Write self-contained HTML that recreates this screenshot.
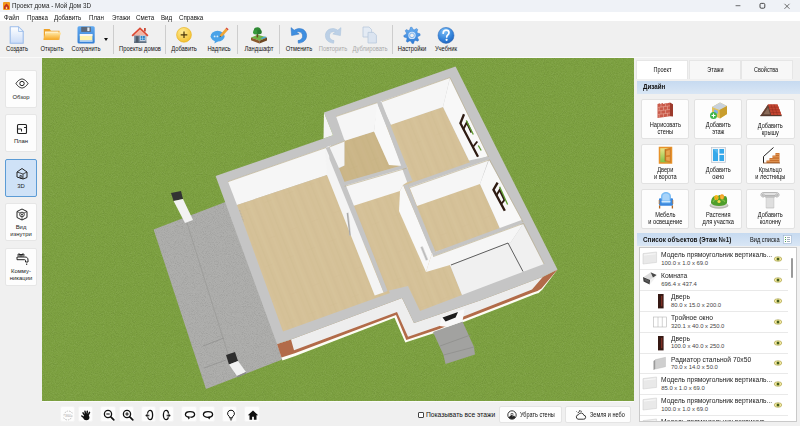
<!DOCTYPE html>
<html><head><meta charset="utf-8">
<style>
*{box-sizing:border-box;margin:0;padding:0}
html,body{width:800px;height:426px;overflow:hidden;background:#f0f0f0;font-family:"Liberation Sans",sans-serif;color:#1a1a1a}
.abs{position:absolute}
svg{display:block;overflow:visible}
#title{left:0;top:0;width:800px;height:12px;background:#eff2f7}
#title .t{left:12px;top:1.2px;font-size:7.4px;line-height:10px;white-space:nowrap;color:#222;transform:scaleX(.85);transform-origin:0 0}
#menu{left:0;top:12px;width:800px;height:10px;background:linear-gradient(to bottom,#fff 0,#fff 9.3px,#f0f0f0 9.3px)}
#menu span{position:absolute;top:.8px;transform:scaleX(.86);transform-origin:0 0;font-size:7.2px;line-height:10px;white-space:nowrap;color:#111}
#tb{left:0;top:22px;width:800px;height:36px;background:#f0f0f0;border-bottom:1px solid #fafafa}
.tl{position:absolute;top:23px;font-size:6.7px;line-height:8px;white-space:nowrap;transform:translateX(-50%) scaleX(.87);color:#111}
.tl.dis{color:#a9a9a9}
.ti{position:absolute;top:4px}
.sep{position:absolute;top:3px;width:1px;height:29px;background:#cdcdcd}
#left{left:0;top:58px;width:42px;height:368px;background:#f0f0f0}
.lb{position:absolute;left:5px;width:32px;height:38px;background:#fdfdfd;border:1px solid #e6e6e6;border-radius:2px}
.lb.sel{background:#cfe2f7;border-color:#5b9bd5}
.lb .tx{position:absolute;left:-4px;right:-4px;text-align:center;font-size:5.9px;line-height:7.2px;color:#222;white-space:nowrap}
.lb svg{position:absolute;left:9px}
#vp{left:42px;top:58px;width:592px;height:343px;background:#7ca040;overflow:hidden}
#bot{left:42px;top:401px;width:594px;height:25px;background:#f0f0f0;border-top:1px solid #fafafa}
.bb{position:absolute;top:4.4px;width:15.6px;height:15.4px;background:#fdfdfd;border-radius:2px;border:.5px solid #f4f4f4}
.bb svg{position:absolute;left:1.8px;top:1.6px}
.btn{position:absolute;top:4px;height:17px;background:#fdfdfd;border:1px solid #e4e4e4;border-radius:2px;font-size:6.4px;line-height:15px;white-space:nowrap;color:#111}.btn span{transform:scaleX(.86);transform-origin:0 50%}
#right{left:634px;top:58px;width:166px;height:368px;background:#f0f0f0}
.tab{position:absolute;top:2.3px;height:18.3px;width:52px;background:#f7f7f7;border:1px solid #e6e6e6;border-bottom:none;text-align:center;font-size:6.4px;line-height:18px;color:#111}
.tab.act{background:#fff}.tab span{display:inline-block;transform:scaleX(.86)}
.hdr{position:absolute;left:3px;width:163px;height:12.4px;background:linear-gradient(#c6daf0,#d9e6f5);font-weight:bold;font-size:7px;line-height:12.4px;color:#111;padding-left:6px;white-space:nowrap}.hdr span.h{display:inline-block;transform:scaleX(.89);transform-origin:0 50%}
.gb{position:absolute;width:48.6px;height:40px;background:#fdfdfd;border:1px solid #e2e2e2;border-radius:2px}
.gb .tx{position:absolute;left:-3px;right:-3px;top:22.6px;text-align:center;font-size:6.3px;line-height:6.9px;color:#111;white-space:nowrap;transform:scaleX(.9)}
.gb svg{position:absolute;left:15px;top:1.6px}
#list{left:5px;top:189.4px;width:158px;height:174.8px;background:#fff;border:1px solid #c9c9c9;overflow:hidden}
.row{position:absolute;left:0;width:148px;height:21px;border-bottom:1px solid #e9e9e9}
.row .n{position:absolute;top:2.1px;font-size:7.3px;line-height:8px;white-space:nowrap;color:#222;transform:scaleX(.917);transform-origin:0 0}
.row .d{position:absolute;top:10.8px;font-size:5.9px;line-height:7px;white-space:nowrap;color:#444}
.row .eye{position:absolute;left:134px;top:7px}
.row .ic{position:absolute}
</style></head><body>
<div id="title" class="abs">
<svg class="abs" style="left:3px;top:2px" width="7" height="8" viewBox="0 0 7 8"><rect width="7" height="8" rx="1" fill="#f39a1e"/><path d="M1 4.2 L3.5 1.6 L6 4.2 V7 H1Z" fill="#c4331d"/><rect x="2.8" y="4.8" width="1.4" height="2.2" fill="#ffd98a"/></svg>
<div class="abs t">Проект дома - Мой Дом 3D</div>
<svg class="abs" style="left:733px;top:0" width="67" height="12" viewBox="0 0 67 12"><path d="M2.6 5.7h4.8" stroke="#333" stroke-width=".7"/><rect x="27" y="3.4" width="4.8" height="4.8" rx="1.2" fill="none" stroke="#333" stroke-width=".9"/><path d="M51.5 3.8l5 5M56.5 3.8l-5 5" stroke="#333" stroke-width=".7"/></svg>
</div>
<div id="menu" class="abs">
<span style="left:4px">Файл</span><span style="left:26.5px">Правка</span><span style="left:54px">Добавить</span><span style="left:89px">План</span><span style="left:111.5px">Этажи</span><span style="left:136px">Смета</span><span style="left:161px">Вид</span><span style="left:178.5px">Справка</span>
</div>
<div id="tb" class="abs">
<div class="ti" style="left:8.399999999999999px"><svg width="18" height="18" viewBox="0 0 18 18" style=""><defs><linearGradient id="gn" x1="0" y1="0" x2="0" y2="1"><stop offset="0" stop-color="#ffffff"/><stop offset="1" stop-color="#cbdcf7"/></linearGradient></defs>
<path d="M2.200 .800h8.300l4.700 4.700V17.200H2.200z" fill="url(#gn)" stroke="#9bbcea" stroke-width="1.100" stroke-linejoin="round"/><path d="M10.500 .800v4.700h4.700z" fill="#eef4fd" stroke="#9bbcea" stroke-width=".800" stroke-linejoin="round"/></svg></div>
<div class="tl" style="left:17.4px">Создать</div>
<div class="ti" style="left:42.5px"><svg width="18" height="18" viewBox="0 0 18 18" style=""><defs><linearGradient id="go" x1="0" y1="0" x2="0" y2="1"><stop offset="0" stop-color="#ffe8a6"/><stop offset="1" stop-color="#f6a823"/></linearGradient></defs>
<path d="M.800 3h5.800l1.400 1.700H16.500v9H.800z" fill="#eea22a"/><path d="M2 5.500h13.500v7.500H2z" fill="#fff8e2"/><path d="M.300 13.700L2.800 6.500h15.400l-2.700 7.200z" fill="url(#go)"/></svg></div>
<div class="tl" style="left:51.5px">Открыть</div>
<div class="ti" style="left:77px"><svg width="18" height="18" viewBox="0 0 18 18" style=""><defs><linearGradient id="gs" x1="0" y1="0" x2="0" y2="1"><stop offset="0" stop-color="#62aaf0"/><stop offset="1" stop-color="#347fd6"/></linearGradient></defs>
<rect x=".500" y=".300" width="17.200" height="17.200" rx="1.500" fill="url(#gs)"/><rect x="4.200" y=".900" width="9.600" height="5" fill="#5d6877"/><rect x="10.300" y="1.500" width="2.200" height="3.600" fill="#e3e9f0"/><rect x="2.800" y="8" width="12.600" height="7.600" fill="#fff3ad"/><rect x="2.800" y="8" width="12.600" height="2" fill="#f6f6f6"/><rect x="2.800" y="14.200" width="12.600" height="1.800" fill="#a5cbf5"/></svg></div>
<div class="tl" style="left:86px">Сохранить</div>
<div class="ti" style="left:130.5px"><svg width="18" height="18" viewBox="0 0 18 18" style=""><rect x="3" y="8" width="12.400" height="8.600" fill="#8697ab"/><rect x="3" y="15.600" width="12.400" height="1.300" fill="#5d6b7c"/><rect x="13" y="2" width="1.800" height="3.500" fill="#c94a36"/><path d="M.500 9.200L9 1.200l8.500 8-1.300 1.300L9 3.800 1.800 10.500z" fill="#dc4630"/><path d="M9 3.400l6.400 6H2.600z" fill="#f2b4a4"/><rect x="4.600" y="10.200" width="3" height="6.400" fill="#4f5b69"/><rect x="9" y="9.600" width="5.400" height="5" fill="#eef6ff"/><path d="M9.500 10.100h2v1.800h-2zM11.900 10.100h2v1.800h-2zM9.500 12.300h2v1.800h-2zM11.900 12.300h2v1.800h-2z" fill="#2d86c9"/></svg></div>
<div class="tl" style="left:139.5px">Проекты домов</div>
<div class="ti" style="left:175px"><svg width="18" height="18" viewBox="0 0 18 18" style=""><defs><radialGradient id="ga" cx=".4" cy=".3" r=".8"><stop offset="0" stop-color="#ffec96"/><stop offset="1" stop-color="#f2bb22"/></radialGradient></defs>
<circle cx="9" cy="8.800" r="7.400" fill="url(#ga)" stroke="#e8ae18" stroke-width=".600"/><path d="M9 5.500v6.600M5.700 8.800h6.600" stroke="#4a3508" stroke-width="1.200"/></svg></div>
<div class="tl" style="left:184px">Добавить</div>
<div class="ti" style="left:209.5px"><svg width="18" height="18" viewBox="0 0 18 18" style=""><ellipse cx="7.6" cy="10.2" rx="7" ry="5.4" fill="#4aa3e8"/><path d="M5 14.6l-.6 3 3.8-2.4z" fill="#4aa3e8"/><circle cx="4.6" cy="10.4" r=".9" fill="#d8ecfb"/><circle cx="7.4" cy="10.4" r=".9" fill="#d8ecfb"/><path d="M9.6 11.2l1-3 5-5.6 2 1.8-5 5.6z" fill="#f2a533"/><path d="M15.6 2.6l1-1.2 2 1.8-1 1.2z" fill="#d94a3a"/><path d="M9.6 11.2l.4-1.4 1 .9z" fill="#3a3a3a"/></svg></div>
<div class="tl" style="left:218.5px">Надпись</div>
<div class="ti" style="left:250px"><svg width="18" height="18" viewBox="0 0 18 18" style=""><path d="M1 11.4l7-2.6 9 2.8-7.6 3.2z" fill="#6fb343"/><path d="M1 11.4v2.8l8.4 3.4v-2.8z" fill="#8a5a2c"/><path d="M9.4 14.8v2.8l7.6-3.2v-2.8z" fill="#6e4520"/><path d="M10.5 12.2l4.5-1.7 1.8.6-4.4 1.9z" fill="#4aa6e6"/><rect x="6.6" y="7" width="1.5" height="4.4" fill="#6b431f"/><circle cx="7.3" cy="4.8" r="3.6" fill="#2f8a34"/><circle cx="5.2" cy="6.2" r="2.2" fill="#37993b"/><circle cx="9.6" cy="6" r="2.3" fill="#2a7d30"/></svg></div>
<div class="tl" style="left:259px">Ландшафт</div>
<div class="ti" style="left:289.5px"><svg width="18" height="18" viewBox="0 0 18 18" style=""><g ><path d="M1 1.6l.6 8 7.6-1.6-2.6-1.8c3-1.2 6 .4 6 3.8 0 2.4-1.6 4.2-4.6 4.6l.4 2.6c5-.4 8.2-3.4 8.2-7.6 0-6-6.600-9.2-12.400-5.400z" fill="#3f8fe0" stroke="#2b6fc0" stroke-width=".5"/></g></svg></div>
<div class="tl" style="left:298.5px">Отменить</div>
<div class="ti" style="left:324px"><svg width="18" height="18" viewBox="0 0 18 18" style=""><g transform="translate(18,0) scale(-1,1)"><path d="M1 1.6l.6 8 7.6-1.6-2.6-1.8c3-1.2 6 .4 6 3.8 0 2.4-1.6 4.2-4.6 4.6l.4 2.6c5-.4 8.2-3.4 8.2-7.6 0-6-6.600-9.2-12.400-5.400z" fill="#bcd0e6" stroke="#a9c0da" stroke-width=".5"/></g></svg></div>
<div class="tl dis" style="left:333px">Повторить</div>
<div class="ti" style="left:361px"><svg width="18" height="18" viewBox="0 0 18 18" style=""><path d="M2 1h6l2.600 2.600V11H2z" fill="#e4ebf4" stroke="#b8c8dc" stroke-width=".8"/><path d="M7 6.400h5.600L15.400 9.200V17H7z" fill="#dbe4f0" stroke="#b8c8dc" stroke-width=".8"/></svg></div>
<div class="tl dis" style="left:370px">Дублировать</div>
<div class="ti" style="left:402.5px"><svg width="18" height="18" viewBox="0 0 18 18" style=""><defs><linearGradient id="gg" x1="0" y1="0" x2="0" y2="1"><stop offset="0" stop-color="#6bb1f2"/><stop offset="1" stop-color="#2e7ad4"/></linearGradient></defs><path d="M17.04 7.80L17.20 9.40L14.88 10.57L14.54 11.70L15.82 13.96L14.80 15.20L12.33 14.39L11.30 14.94L10.60 17.44L9.00 17.60L7.83 15.28L6.70 14.94L4.44 16.22L3.20 15.20L4.01 12.73L3.46 11.70L0.96 11.00L0.80 9.40L3.12 8.23L3.46 7.10L2.18 4.84L3.20 3.60L5.67 4.41L6.70 3.86L7.40 1.36L9.00 1.20L10.17 3.52L11.30 3.86L13.56 2.58L14.80 3.60L13.99 6.07L14.54 7.10Z" fill="url(#gg)" stroke="#2a6ec4" stroke-width=".4" stroke-linejoin="round"/><circle cx="9" cy="9.4" r="3.700" fill="#cfe3f9"/><circle cx="9" cy="9.4" r="2.300" fill="#f0f0f0" stroke="#5a9fe8" stroke-width=".700"/></svg></div>
<div class="tl" style="left:411.5px">Настройки</div>
<div class="ti" style="left:437px"><svg width="18" height="18" viewBox="0 0 18 18" style=""><defs><radialGradient id="gh" cx=".4" cy=".25" r=".9"><stop offset="0" stop-color="#7cc0f8"/><stop offset=".6" stop-color="#2f7fd8"/><stop offset="1" stop-color="#1c57ad"/></radialGradient></defs>
<circle cx="9" cy="9.400" r="8" fill="url(#gh)" stroke="#1f5cb0" stroke-width=".5"/><path d="M6.200 7.200c0-2 1.300-3 2.900-3 1.700 0 2.900 1 2.900 2.500 0 2.200-2.300 2.300-2.300 4.300" fill="none" stroke="#fff" stroke-width="1.700" stroke-linecap="round"/><circle cx="9.600" cy="13.800" r="1.100" fill="#fff"/></svg></div>
<div class="tl" style="left:446px">Учебник</div>
<div class="abs" style="left:104px;top:15.5px;width:0;height:0;border-left:2.2px solid transparent;border-right:2.2px solid transparent;border-top:3px solid #111"></div>
<div class="sep" style="left:113px"></div>
<div class="sep" style="left:164.6px"></div>
<div class="sep" style="left:237px"></div>
<div class="sep" style="left:279px"></div>
<div class="sep" style="left:391.6px"></div>
</div>
<div id="left" class="abs">
<div class="lb" style="top:11.6px"><svg width="14" height="13" viewBox="0 0 14 13" style="top:7.6px"><path d="M1 5.500C3 2 6 1 7 1s4 1 6 4.500C11 9 8 10 7 10S3 9 1 5.500z" fill="none" stroke="#222" stroke-width="1"/><circle cx="7" cy="5.500" r="2.200" fill="none" stroke="#222" stroke-width="1"/></svg><div class="tx" style="top:23.2px">Обзор</div></div>
<div class="lb" style="top:56px"><svg width="14" height="13" viewBox="0 0 14 13" style="top:7.6px"><rect x="2.500" y="1.500" width="9" height="9" rx="1" fill="none" stroke="#222" stroke-width="1.100"/><path d="M2.500 6h4v2.500M9 4.500h2.500" fill="none" stroke="#222" stroke-width="1"/></svg><div class="tx" style="top:23.2px">План</div></div>
<div class="lb sel" style="top:100.6px"><svg width="14" height="13" viewBox="0 0 14 13" style="top:7.6px"><path d="M2 5l5-3.500 5 3.500v5.500l-4 1.500-6-2z" fill="none" stroke="#222" stroke-width="1" stroke-linejoin="round"/><path d="M2 5l6 2v5M8 7l4-2M5 8.500v2.500l2 .500V9z" fill="none" stroke="#222" stroke-width=".800"/></svg><div class="tx" style="top:23.2px">3D</div></div>
<div class="lb" style="top:145.2px"><svg width="14" height="13" viewBox="0 0 14 13" style="top:4.2px"><path d="M2 3.500l5-2.500 5 2.500v6L7 12 2 9.500z" fill="none" stroke="#222" stroke-width="1" stroke-linejoin="round"/><path d="M2 3.500l5 2.500 5-2.500M7 6v6" fill="none" stroke="#222" stroke-width=".700"/><circle cx="7" cy="6.500" r="2.300" fill="#fdfdfd" stroke="#222" stroke-width=".900"/><circle cx="7" cy="6.500" r=".900" fill="#222"/></svg><div class="tx" style="top:19.4px">Вид<br>изнутри</div></div>
<div class="lb" style="top:189.8px"><svg width="14" height="13" viewBox="0 0 14 13" style="top:4.2px"><path d="M3.500 1.500h5M6 1.500v2.500M2 4h8c2 0 3 1 3 3v2h-2.500V7.500c0-.500-.300-.800-.800-.800H2z" fill="none" stroke="#222" stroke-width="1" stroke-linejoin="round"/><circle cx="4" cy="2" r="1.200" fill="none" stroke="#222" stroke-width=".800"/><circle cx="8" cy="2" r="1.200" fill="none" stroke="#222" stroke-width=".800"/><path d="M11.700 10.500v1.500" stroke="#222" stroke-width="1"/></svg><div class="tx" style="top:19.4px">Комму-<br>никации</div></div>
</div>
<div id="vp" class="abs"><svg viewBox="42 58 594 344" width="594" height="344" style="position:absolute;left:0;top:0"><defs><pattern id="wood" width="23" height="60" patternUnits="userSpaceOnUse" patternTransform="rotate(-21.5)"><rect width="23" height="60" fill="#d5c198"/><rect x="0" width="2.600" height="60" fill="#ccb78b" opacity=".22"/><rect x="5.500" width="1.200" height="60" fill="#dbc8a0" opacity=".26"/><rect x="9" width="2.200" height="60" fill="#cfba8f" opacity=".22"/><rect x="14" width="1.500" height="60" fill="#cab588" opacity=".22"/><rect x="18" width="2.400" height="60" fill="#dac69e" opacity=".22"/><rect x="2" y="20" width="7" height=".600" fill="#c9b388" opacity=".22"/><rect x="11" y="45" width="8" height=".600" fill="#c9b388" opacity=".22"/></pattern><filter id="nw" x="0" y="0" width="100%" height="100%" color-interpolation-filters="sRGB"><feTurbulence type="fractalNoise" baseFrequency="1.1" numOctaves="2" seed="7"/><feColorMatrix values="0 0 0 0 1  0 0 0 0 1  0 0 0 0 1  .2 0 0 0 -.1"/></filter><filter id="nb" x="0" y="0" width="100%" height="100%" color-interpolation-filters="sRGB"><feTurbulence type="fractalNoise" baseFrequency="1.1" numOctaves="2" seed="7"/><feColorMatrix values="0 0 0 0 0  0 0 0 0 0  0 0 0 0 0  -.2 0 0 0 .1"/></filter></defs><rect x="42" y="58" width="594" height="344" filter="url(#nw)"/><rect x="42" y="58" width="594" height="344" filter="url(#nb)"/><polygon points="153.6,229.6 228,201 284,357 281,360 206,389" fill="#acacaa" />
<clipPath id="cp"><polygon points="153.6,229.6 228,201 284,357 281,360 206,389"/></clipPath><g clip-path="url(#cp)"><rect x="150" y="198" width="140" height="195" filter="url(#nw)"/><rect x="150" y="198" width="140" height="195" filter="url(#nb)"/></g>
<polyline points="187,223 228,354" fill="none" stroke="#9a9a98" stroke-width="0.8" />
<polyline points="203,346 224,338" fill="none" stroke="#8e8e8c" stroke-width="0.7" />
<polyline points="204,368 226,360" fill="none" stroke="#8e8e8c" stroke-width="0.7" />
<polygon points="171,193 181,191 183,199 173.6,201" fill="#333" />
<polygon points="173.6,201 183,199 193,220 185,223" fill="#f2f2f2" />
<polygon points="226,355 235,352 238,361 229,364.4" fill="#2e2e2e" />
<polygon points="229,364.4 238,361 246,372 237,376" fill="#f2f2f2" />
<polygon points="237,376 246,372 246.5,373.5 237.5,377.5" fill="#8a8a88" />
<polygon points="277,344 291,339.5 402,298 414,323 480,300.5 543,276.7 557.5,269.5 542.2,289.8 538.6,293 534,294.6 439,331.6 405.3,342.6 394.5,317.8 295.3,356 282.4,360.4 280,352" fill="#fdfdf5" />
<polygon points="277,344 291,339.5 402,298 414,323 480,300.5 543,276.7 557.5,269.5 541.5,288.4 537.5,291 533,292.4 438.5,329.3 406.3,340 396,315 294.8,353.3 281.5,357.4" fill="#b26b49" />
<polygon points="291,339.5 402,298 414,323 480,300.5 543,276.7 532,289.5 438,326.5 408,336.7 397,312 294,350.3" fill="#eeeeee" />
<polygon points="215.6,176 333,135.3 324,112.4 455.6,66.6 557.5,269.5 543,276.7 480,300.5 414,323 402,298 291,339.5 277,344" fill="#c5c5c5" />
<polygon points="324,112.4 323.5,138.4 333,135.3" fill="#f4f4f4" />
<polygon points="228,181.5 331,145.5 327,175 237,205" fill="#f6f6f6" />
<polygon points="237,205 327,175 390,293 283,331.6" fill="url(#wood)" />
<polygon points="344.4,140.6 374,131.5 392,124 443,107 469,160.5 480,184 494,215 505,240 450,265 462,295 420,311 408,286 387,291 338,169 344.4,165.6" fill="url(#wood)" />
<polygon points="344.4,140.6 374,131.5 389,165 403,165 343,183 338,169 344.4,165.6" fill="#8a6a20" opacity=".13"/>
<polygon points="336,116.2 378,102.2 374,131.5 345,140.8 344,139" fill="#f6f6f6" />
<polygon points="329,147 344.4,141 344.4,165.6 337,168.75" fill="#f4f4f4" />
<polygon points="380,101.8 450,77.4 443,107 391,124.8" fill="#f6f6f6" />
<polygon points="450,78 443,107 469,160.5 488,156.5" fill="#f8f8f8" />
<polygon points="377,102.6 374,131.5 389,165 402,166" fill="#f8f8f8" />
<polygon points="344,184 404,167 407,166.5 409,181 403,185 400,191 353,206" fill="#f6f6f6" />
<polygon points="403,185 400,191 399,211 426,272 432,253" fill="#f8f8f8" />
<polygon points="409,186 489,158 480,184 417,206" fill="#f6f6f6" />
<polygon points="489,160 480,184 494,215 505,240 523,222" fill="#f8f8f8" />
<polygon points="432,253 523,224 511,242 450,265 426,272" fill="#f6f6f6" />
<polygon points="450,265 511,242 523,224 544,264 462,295" fill="#f0f0f0" />
<polyline points="451,265 508,243 523,271.5" fill="none" stroke="#3a3a3a" stroke-width="0.8" />
<polygon points="325,148 327,175 374.7,295.6 383.6,292.6" fill="#f4f4f4" />
<polygon points="325.5,147.5 329.5,147 339.8,170 367.5,240 387.6,291 383.6,292.6 363.2,240 335.4,170" fill="#c5c5c5" />
<polygon points="346.6,213 348.6,212.4 351,235 349.4,236" fill="#c9c9c9" />
<polyline points="347.3,213 350,235.5" fill="none" stroke="#8f8f8f" stroke-width="0.6" />
<polygon points="377,102.6 381.3,101.6 392.3,130 412.4,180.4 407.2,182.2 388,130" fill="#c5c5c5" />
<polygon points="343,182.3 406,164.3 406.8,167.6 344.6,185.7" fill="#c5c5c5" />
<polygon points="408,184 488,156 489.6,159.3 409.2,187.3" fill="#c5c5c5" />
<polygon points="403.4,185 407.8,184.2 435.4,251.8 431.5,253" fill="#c5c5c5" />
<polygon points="432,253 522.3,219.8 523.6,223 433,256.3" fill="#c5c5c5" />
<polyline points="228,181.7 326,147.6" fill="none" stroke="#b7aa84" stroke-width="0.8" opacity=".75"/>
<polyline points="336,116.5 377.5,102.6" fill="none" stroke="#b7aa84" stroke-width="0.8" opacity=".75"/>
<polyline points="382,101.6 450,77.6 488.5,157" fill="none" stroke="#b7aa84" stroke-width="0.8" opacity=".75"/>
<polyline points="344.7,186.3 406.6,168.2" fill="none" stroke="#b7aa84" stroke-width="0.8" opacity=".75"/>
<polyline points="409.6,187.7 489.6,159.8 523,222" fill="none" stroke="#b7aa84" stroke-width="0.8" opacity=".75"/>
<polyline points="433.2,256.6 523.6,223.4 544,264" fill="none" stroke="#b7aa84" stroke-width="0.8" opacity=".75"/>
<polyline points="329,147.2 344.4,141.2" fill="none" stroke="#b7aa84" stroke-width="0.8" opacity=".75"/>
<polygon points="420.3,247.2 422.8,246.2 428.2,259.6 425.8,260.8" fill="#d2d2d2" />
<polyline points="421.5,246.8 427,260.2" fill="none" stroke="#9a9a9a" stroke-width="0.5" />
<polyline points="239.6,210 243.8,222" fill="none" stroke="#a8a8a8" stroke-width="0.9" stroke-dasharray="0.8 0.8"/>
<polyline points="464,114.3 460.4,123.2 478,156.7" fill="none" stroke="#2e1b12" stroke-width="2.3" />
<polyline points="463.2,129.5 466.8,122.5 471.5,132.5" fill="none" stroke="#2e1b12" stroke-width="1.9" />
<polyline points="473.3,146.5 477.3,141.5" fill="none" stroke="#2e1b12" stroke-width="1.9" />
<polyline points="466.3,120.5 473.3,134.5" fill="none" stroke="#5f9c30" stroke-width="1.3" />
<polyline points="478.3,145.5 481.2,150.5" fill="none" stroke="#5f9c30" stroke-width="1.3" />
<polyline points="497.6,182.7 493.5,189.7 504.8,210.8" fill="none" stroke="#2e1b12" stroke-width="2.4" />
<polyline points="496.3,195.5 499.6,190 504.5,200" fill="none" stroke="#2e1b12" stroke-width="1.9" />
<polyline points="501,204.2 504.5,200" fill="none" stroke="#2e1b12" stroke-width="1.9" />
<polyline points="499.6,186.8 507.6,204.5" fill="none" stroke="#5f9c30" stroke-width="1.3" />
<polygon points="433,332 462.5,321.5 474,347 475,354.5 445.5,364 443.5,355" fill="#a2a2a0" />
<polyline points="440,346 470.5,335" fill="none" stroke="#8c8c8a" stroke-width="0.7" />
<polyline points="443.5,355 474,347" fill="none" stroke="#8c8c8a" stroke-width="0.7" />
<polygon points="439.5,326 441.5,317.2 464.5,309 462.5,321.5 447,327" fill="#f8f8f8" />
<polygon points="442.5,317.5 458,311.9 455.6,317.6 445.6,321.6" fill="#1c1c1c" /></svg></div>
<div id="bot" class="abs">
<div class="bb" style="left:17.6px"><svg width="12" height="12" viewBox="0 0 12 12" style=""><path d="M2 6.500a4.500 4.500 0 0 1 8.500-2M10 6.500a4.500 4.500 0 0 1-8.500 2" fill="none" stroke="#b5b5b5" stroke-width=".900" stroke-dasharray="1.500 1"/><text x="6" y="8" font-size="4" text-anchor="middle" fill="#aaa" font-family="Liberation Sans">360</text></svg></div>
<div class="bb" style="left:35.599999999999994px"><svg width="12" height="12" viewBox="0 0 12 12" style=""><ellipse cx="6.400" cy="8.500" rx="3" ry="2.700" fill="#111"/><path d="M6.200 8.500L3 3.800M6.300 8.500L5 2.300M6.600 8.500L7.300 2.200M7 8.500L9.500 3.400M5 9.400L1.800 7" stroke="#111" stroke-width="1.500" stroke-linecap="round"/></svg></div>
<div class="bb" style="left:58.3px"><svg width="12" height="12" viewBox="0 0 12 12" style=""><circle cx="5" cy="5" r="3.600" fill="none" stroke="#111" stroke-width="1.300"/><path d="M7.800 7.800l3 3" stroke="#111" stroke-width="1.700" stroke-linecap="round"/><path d="M3.300 5h3.400" stroke="#111" stroke-width="1.100"/></svg></div>
<div class="bb" style="left:76.8px"><svg width="12" height="12" viewBox="0 0 12 12" style=""><circle cx="5" cy="5" r="3.600" fill="none" stroke="#111" stroke-width="1.300"/><path d="M7.800 7.800l3 3" stroke="#111" stroke-width="1.700" stroke-linecap="round"/><path d="M3.300 5h3.400M5 3.300v3.400" stroke="#111" stroke-width="1.100"/></svg></div>
<div class="bb" style="left:98.6px"><svg width="12" height="12" viewBox="0 0 12 12" style=""><ellipse cx="7" cy="6" rx="2.600" ry="4.600" fill="none" stroke="#111" stroke-width="1.300"/><path d="M2 6.500l2.500-2v1.300h2v1.400h-2v1.300z" fill="#111" stroke="#fdfdfd" stroke-width=".400"/></svg></div>
<div class="bb" style="left:116.5px"><svg width="12" height="12" viewBox="0 0 12 12" style=""><ellipse cx="5" cy="6" rx="2.600" ry="4.600" fill="none" stroke="#111" stroke-width="1.300"/><path d="M10 6.500l-2.500-2v1.300h-2v1.400h2v1.300z" fill="#111" stroke="#fdfdfd" stroke-width=".400"/></svg></div>
<div class="bb" style="left:139.3px"><svg width="12" height="12" viewBox="0 0 12 12" style=""><ellipse cx="6" cy="5.500" rx="4.600" ry="2.800" fill="none" stroke="#111" stroke-width="1.300"/><path d="M4.500 10.500l2.500-2.600-3.400-.400z" fill="#111"/><path d="M5 8.200l2 .2" stroke="#fdfdfd" stroke-width=".5"/></svg></div>
<div class="bb" style="left:157.2px"><svg width="12" height="12" viewBox="0 0 12 12" style=""><ellipse cx="6" cy="5.500" rx="4.600" ry="2.800" fill="none" stroke="#111" stroke-width="1.300"/><path d="M7.500 10.500L5 7.900l3.400-.400z" fill="#111"/></svg></div>
<div class="bb" style="left:179.9px"><svg width="12" height="12" viewBox="0 0 12 12" style=""><path d="M6 1.200a3.300 3.300 0 0 0-2 6c.500.500.700 1 .700 1.600h2.600c0-.600.200-1.100.700-1.600a3.300 3.300 0 0 0-2-6z" fill="none" stroke="#111" stroke-width="1"/><path d="M4.800 9.800h2.400M5.100 10.900h1.800" stroke="#111" stroke-width=".800"/></svg></div>
<div class="bb" style="left:202.3px"><svg width="12" height="12" viewBox="0 0 12 12" style=""><path d="M6 1.500L.800 6.300h1.700v4.500h2.600V7.800h1.800v3h2.600V6.300h1.700z" fill="#111"/></svg></div>
<div class="abs" style="left:376px;top:9.500px;width:6px;height:6px;border:.8px solid #444;background:#fff;border-radius:1px"></div>
<div class="abs" style="left:384px;top:5px;font-size:6.700px;line-height:15px;white-space:nowrap;color:#111">Показывать все этажи</div>
<div class="btn" style="left:456.500px;width:63px"><svg width="10" height="10" viewBox="0 0 10 10" style="position:absolute;left:7.500px;top:2.800px"><circle cx="5" cy="5" r="4.200" fill="none" stroke="#222" stroke-width=".900"/><path d="M1.500 7.200a4.200 4.200 0 0 0 7 0L7 5.500 5.800 6.500 4.500 5z" fill="#222"/><path d="M4 3.500h2v2H4z" fill="none" stroke="#222" stroke-width=".600"/></svg><span style="position:absolute;left:20px">Убрать стены</span></div>
<div class="btn" style="left:523px;width:66px"><svg width="11" height="10" viewBox="0 0 11 10" style="position:absolute;left:8.500px;top:2.800px"><path d="M3 9.200h5.500a2 2 0 0 0 .300-4 2.800 2.800 0 0 0-5.300-.500A2.300 2.300 0 0 0 3 9.200z" fill="none" stroke="#222" stroke-width=".900"/><path d="M3.200 3.200a2.200 2.200 0 0 1 3.600-1.700" fill="none" stroke="#222" stroke-width=".800"/><path d="M1.300 1.300l.900.900M4.500.200v1.200" stroke="#222" stroke-width=".600"/></svg><span style="position:absolute;left:23.500px">Земля и небо</span></div>
</div>
<div id="right" class="abs">
<div class="tab act" style="left:2.4px"><span>Проект</span></div>
<div class="tab" style="left:55.4px"><span>Этажи</span></div>
<div class="tab" style="left:106.5px"><span>Свойства</span></div>
<div class="hdr" style="top:23.4px"><span class="h">Дизайн</span></div>
<div class="gb" style="left:6.8px;top:40.6px"><svg width="20" height="18" viewBox="0 0 20 18" style="left:14.0px"><path d="M1.500 3L4 2.200V3l3-.900V3l3.500-1V2.600L14 1.600V15.200L1.500 17z" fill="#c95a4a"/><path d="M14 1.600l3 1.600V15.600l-3-.400z" fill="#9c3a2c"/><path d="M1.500 6.500L14 4.800M1.500 10L14 8.400M1.500 13.500L14 12M5 3v3M9.500 2.500v2.900M3.200 6.300v3.500M7.500 5.700v3.500M11.500 5.200v3.500M5 9.600v3.500M9.500 9v3.500M3.200 13.300v3.500M7.500 12.800v3.500M11.500 12.300v3.500" stroke="#eab0a2" stroke-width=".550" fill="none"/></svg><div class="tx">Нарисовать<br>стены</div></div>
<div class="gb" style="left:59.6px;top:40.6px"><svg width="20" height="18" viewBox="0 0 20 18" style="left:14.0px"><path d="M3 6l8-4.500 7 3.500v8l-7 4.500-8-3.500z" fill="#e3c25a"/><path d="M3 6l8-4.500 7 3.500-7.500 4z" fill="#c9d2dc"/><path d="M10.500 9L18 5v8l-7 4.500z" fill="#c99e2e"/><path d="M5 8.200l3.800 1.600v3.200L5 11.400z" fill="#7db1e8"/><circle cx="4.500" cy="14.500" r="3.500" fill="#3db54a"/><path d="M4.500 12.500v4M2.500 14.500h4" stroke="#fff" stroke-width="1.100"/></svg><div class="tx">Добавить<br>этаж</div></div>
<div class="gb" style="left:112.4px;top:40.6px"><svg width="22" height="18" viewBox="0 0 22 18" style="left:13.0px"><path d="M1 14L8 3.500h9.500l4 10.500z" fill="#b23a2a"/><path d="M8 3.500h9.500l4 10.500H11.200z" fill="#c44632"/><path d="M1 14L8 3.500l3.200 10.500z" fill="#5e4336"/><path d="M3.500 13.200L8 6.500l2 6.700z" fill="#8a6a58"/><path d="M8.900 6.200h9.600M9.700 8.800h9.800M10.500 11.400h10M11 3.500l3 10.500M14 3.500l3.500 10.500" stroke="#8e2a1e" stroke-width=".500"/><path d="M.300 14h21.400v1.200H.300z" fill="#54392e"/></svg><div class="tx" style="top:23.6px">Добавить<br>крышу</div></div>
<div class="gb" style="left:6.8px;top:85.6px"><svg width="20" height="18" viewBox="0 0 20 18" style="left:14.0px"><defs><linearGradient id="gd" x1="0" y1="0" x2="0" y2="1"><stop offset="0" stop-color="#f3e58a"/><stop offset="1" stop-color="#7cc043"/></linearGradient></defs><rect x="3.500" y="1.500" width="12" height="15.500" fill="url(#gd)" stroke="#e8922a" stroke-width="1.500"/><path d="M9 3.200L15 1.500V17L9 15.300z" fill="#d2812a"/><path d="M10.200 5l3.600-.900v5l-3.600.500zM10.200 11l3.600-.300v4.300l-3.600-.700z" fill="#e8a550"/><path d="M9 3.200V15.300" stroke="#8a4a12" stroke-width=".500"/></svg><div class="tx">Двери<br>и ворота</div></div>
<div class="gb" style="left:59.6px;top:85.6px"><svg width="20" height="18" viewBox="0 0 20 18" style="left:14.0px"><rect x="2.500" y="1.500" width="14" height="15" fill="#f2f5f8" stroke="#b9c4cf" stroke-width=".700"/><rect x="4" y="3" width="5" height="12" fill="#35a8ea"/><rect x="10.400" y="3" width="4.600" height="4.600" fill="#35a8ea"/><rect x="10.400" y="9" width="4.600" height="6" fill="#35a8ea"/><path d="M4 3l5 5V3z" fill="#6cc4f4" opacity=".6"/></svg><div class="tx">Добавить<br>окно</div></div>
<div class="gb" style="left:112.4px;top:85.6px"><svg width="20" height="18" viewBox="0 0 20 18" style="left:14.0px"><path d="M5.500 17v-2.600h3v-2.500h3V9.400h3V6.900h4V17z" fill="#c86f2c"/><path d="M5.500 15.800h13M8.500 13.300h10M11.500 10.800h7M14.500 8.300h4" stroke="#f0b070" stroke-width=".700"/><path d="M2.500 17V10.500L12.500 1.500" fill="none" stroke="#222" stroke-width="1"/><path d="M2 17h17" stroke="#8a4a1c" stroke-width=".800"/></svg><div class="tx">Крыльцо<br>и лестницы</div></div>
<div class="gb" style="left:6.8px;top:130.6px"><svg width="20" height="18" viewBox="0 0 20 18" style="left:14.0px"><path d="M5 10V5.500C5 2.500 7.500 1 10 1s5 1.500 5 4.500V10z" fill="#7dbdf5"/><path d="M6.500 9.500V5.800C6.500 3.800 8 2.600 10 2.600s3.500 1.200 3.500 3.200v3.700z" fill="#a8d4fa"/><path d="M3 8.200c0-1.200 2.600-1.200 2.600 0V11h8.800V8.200c0-1.200 2.600-1.200 2.600 0v5.300c0 .800-.600 1.300-1.500 1.300H4.500c-.900 0-1.500-.500-1.500-1.300z" fill="#3b88de"/><path d="M5.600 10.600h8.800v1.600H5.600z" fill="#8cc6f7"/><path d="M3.600 14.600v2.800M16.400 14.600v2.800" stroke="#b5651d" stroke-width="1.300"/><path d="M3.200 9v4M16.800 9v4" stroke="#c97a2e" stroke-width=".800"/></svg><div class="tx">Мебель<br>и освещение</div></div>
<div class="gb" style="left:59.6px;top:130.6px"><svg width="20" height="18" viewBox="0 0 20 18" style="left:14.0px"><ellipse cx="10" cy="14.500" rx="9.500" ry="3.200" fill="#b9b9b1"/><ellipse cx="10" cy="13.600" rx="8.600" ry="2.600" fill="#d6d6cf"/><path d="M2 12c0-4 2-7 4-7 1 0 1.500 1 2 2 .500-2 1.500-3 3-3s2 1.500 2.500 3c.500-1 1.500-2 2.500-2 2 0 2.500 3 2 7-1 2-4 3-8 3s-7-1-8-3z" fill="#4f9e2c"/><path d="M4 11c1-2 2-3 3.500-2.500M16 11c-1-2-2-2.500-3.500-2" stroke="#7cc043" stroke-width="1.200" fill="none"/><path d="M5.200 6.800c0-1.600.600-2.800 2.200-2.800s2.200 1.200 2.200 2.800c0 1.500-1 2.400-2.200 2.400s-2.200-.900-2.200-2.400z" fill="#f5c21c"/><path d="M6.300 5.200c.400 1.200.400 2.400 1.100 3.600.700-1.200.700-2.400 1.100-3.600" stroke="#e08a12" stroke-width=".600" fill="none"/><path d="M10.800 6c0-1.600.600-2.800 2.200-2.800s2.200 1.200 2.200 2.800c0 1.500-1 2.400-2.200 2.400s-2.200-.900-2.200-2.400z" fill="#f39a1e"/><path d="M11.900 4.400c.400 1.200.400 2.400 1.100 3.600.700-1.200.700-2.400 1.100-3.600" stroke="#f7d25a" stroke-width=".600" fill="none"/><circle cx="10" cy="10.500" r="1.600" fill="#f7d84a"/></svg><div class="tx">Растения<br>для участка</div></div>
<div class="gb" style="left:112.4px;top:130.6px"><svg width="20" height="18" viewBox="0 0 20 18" style="left:14.0px"><path d="M2.500 1.500h13c1.600 0 2.600 1 2.600 2.300S17.100 6 15.800 6c-1 0-1.700-.600-1.700-1.400H3.900C3.900 5.400 3.200 6 2.200 6 .900 6-.100 5.100-.100 3.800S.900 1.500 2.500 1.500z" fill="#e2e2e2" stroke="#8f8f8f" stroke-width=".600"/><circle cx="2.300" cy="3.900" r="1" fill="none" stroke="#8f8f8f" stroke-width=".500"/><circle cx="15.700" cy="3.900" r="1" fill="none" stroke="#8f8f8f" stroke-width=".500"/><path d="M4.500 4.800h9v1.500h-9z" fill="#cfcfcf" stroke="#9a9a9a" stroke-width=".400"/><path d="M5.200 6.300h7.600V17H5.200z" fill="#efefef" stroke="#a2a2a2" stroke-width=".500"/><path d="M7 6.300V17M9 6.300V17M11 6.300V17" stroke="#b8b8b8" stroke-width=".600"/></svg><div class="tx">Добавить<br>колонну</div></div>
<div class="hdr" style="top:174.800px;height:13.2px;line-height:13.2px"><span class="h" style="transform:scaleX(.905)">Список объектов (Этаж №1)</span><span style="position:absolute;left:113px;font-weight:normal;font-size:6.400px;transform:scaleX(.89);transform-origin:0 50%">Вид списка</span><svg width="9" height="9" viewBox="0 0 9 9" style="position:absolute;left:146px;top:2.200px"><rect x=".500" y=".500" width="8" height="8" fill="#fff" stroke="#9bb3cf" stroke-width=".600"/><path d="M2 2.500h1M2 4.500h1M2 6.500h1" stroke="#3a9a3a" stroke-width=".900"/><path d="M4 2.500h3M4 4.500h3M4 6.500h3" stroke="#7a8da5" stroke-width=".700"/></svg></div>
<div id="list" class="abs"><div class="row" style="top:0.8px"><div class="ic" style="left:3.2px;top:3.2px"><svg width="14" height="13" viewBox="0 0 14 13" style=""><path d="M0 1.600L13.600 0v10.400L0 12z" fill="#e9e9e9" stroke="#d2d2d2" stroke-width=".600"/><path d="M1 2.600L12.600 1.200v1L1 3.600z" fill="#f8f8f8"/></svg></div><div class="n" style="left:21.2px">Модель прямоугольник вертикаль...</div><div class="d" style="left:21.2px">100.0 x 1.0 x 69.0</div><div class="eye"><svg width="8" height="6" viewBox="0 0 8 6" style=""><ellipse cx="4" cy="3" rx="3.800" ry="2.300" fill="#f4e7a0" stroke="#8f8a2a" stroke-width=".500"/><circle cx="4" cy="3" r="1.500" fill="#5a7d1e"/><circle cx="4" cy="3" r=".700" fill="#222"/></svg></div></div>
<div class="row" style="top:21.650000000000002px"><div class="ic" style="left:3.2px;top:2.2px"><svg width="14" height="13" viewBox="0 0 14 13" style=""><path d="M1 4.800L7.600 .500L9.900 5.700L7.100 7.900z" fill="#dcdcdc"/><path d="M7.600 .200L13.700 3.100L10 5.700z" fill="#484848"/><path d="M0 5L7.100 7.900L6.700 12.600L.600 9.500z" fill="#3e3e3e"/><path d="M1.500 6.500L6 8.500L5.800 10.800L1.800 8.800z" fill="#5a5a5a"/><path d="M7.100 7.900L13.700 3.200L13.400 4.600L6.800 12.500z" fill="#f1f1f1"/></svg></div><div class="n" style="left:21.2px">Комната</div><div class="d" style="left:21.2px">696.4 x 437.4</div><div class="eye"><svg width="8" height="6" viewBox="0 0 8 6" style=""><ellipse cx="4" cy="3" rx="3.800" ry="2.300" fill="#f4e7a0" stroke="#8f8a2a" stroke-width=".500"/><circle cx="4" cy="3" r="1.500" fill="#5a7d1e"/><circle cx="4" cy="3" r=".700" fill="#222"/></svg></div></div>
<div class="row" style="top:42.5px"><div class="ic" style="left:17px;top:4px"><svg width="14" height="13" viewBox="0 0 14 13" style=""><rect x="1" y="-1" width="5.600" height="14.400" fill="#351813"/><rect x="4" y=".800" width="1.400" height="10.500" fill="#7a2e24"/></svg></div><div class="n" style="left:31px">Дверь</div><div class="d" style="left:31px">80.0 x 15.0 x 200.0</div><div class="eye"><svg width="8" height="6" viewBox="0 0 8 6" style=""><ellipse cx="4" cy="3" rx="3.800" ry="2.300" fill="#f4e7a0" stroke="#8f8a2a" stroke-width=".500"/><circle cx="4" cy="3" r="1.500" fill="#5a7d1e"/><circle cx="4" cy="3" r=".700" fill="#222"/></svg></div></div>
<div class="row" style="top:63.35px"><div class="ic" style="left:13px;top:4px"><svg width="14" height="13" viewBox="0 0 14 13" style=""><rect x=".500" y="1" width="13" height="10" fill="#fff" stroke="#b5b5b5" stroke-width=".600"/><path d="M5 1v10M9.300 1v10" stroke="#b5b5b5" stroke-width=".600"/></svg></div><div class="n" style="left:31px">Тройное окно</div><div class="d" style="left:31px">320.1 x 40.0 x 250.0</div><div class="eye"><svg width="8" height="6" viewBox="0 0 8 6" style=""><ellipse cx="4" cy="3" rx="3.800" ry="2.300" fill="#f4e7a0" stroke="#8f8a2a" stroke-width=".500"/><circle cx="4" cy="3" r="1.500" fill="#5a7d1e"/><circle cx="4" cy="3" r=".700" fill="#222"/></svg></div></div>
<div class="row" style="top:84.2px"><div class="ic" style="left:17px;top:4px"><svg width="14" height="13" viewBox="0 0 14 13" style=""><rect x="1" y="-1" width="5.600" height="14.400" fill="#351813"/><rect x="4" y=".800" width="1.400" height="10.500" fill="#7a2e24"/></svg></div><div class="n" style="left:31px">Дверь</div><div class="d" style="left:31px">100.0 x 40.0 x 250.0</div><div class="eye"><svg width="8" height="6" viewBox="0 0 8 6" style=""><ellipse cx="4" cy="3" rx="3.800" ry="2.300" fill="#f4e7a0" stroke="#8f8a2a" stroke-width=".500"/><circle cx="4" cy="3" r="1.500" fill="#5a7d1e"/><circle cx="4" cy="3" r=".700" fill="#222"/></svg></div></div>
<div class="row" style="top:105.05px"><div class="ic" style="left:12.5px;top:4px"><svg width="14" height="13" viewBox="0 0 14 13" style=""><path d="M.5 4L2.500 2.600V12L.5 13z" fill="#9a9a9a"/><path d="M2.500 2.600L12.500 .3v9.400L2.500 12z" fill="#cfcfcf" stroke="#b5b5b5" stroke-width=".400"/></svg></div><div class="n" style="left:31px">Радиатор стальной 70x50</div><div class="d" style="left:31px">70.0 x 14.0 x 50.0</div><div class="eye"><svg width="8" height="6" viewBox="0 0 8 6" style=""><ellipse cx="4" cy="3" rx="3.800" ry="2.300" fill="#f4e7a0" stroke="#8f8a2a" stroke-width=".500"/><circle cx="4" cy="3" r="1.500" fill="#5a7d1e"/><circle cx="4" cy="3" r=".700" fill="#222"/></svg></div></div>
<div class="row" style="top:125.9px"><div class="ic" style="left:3.2px;top:3.2px"><svg width="14" height="13" viewBox="0 0 14 13" style=""><path d="M0 1.600L13.600 0v10.400L0 12z" fill="#e9e9e9" stroke="#d2d2d2" stroke-width=".600"/><path d="M1 2.600L12.600 1.200v1L1 3.600z" fill="#f8f8f8"/></svg></div><div class="n" style="left:21.2px">Модель прямоугольник вертикаль...</div><div class="d" style="left:21.2px">85.0 x 1.0 x 69.0</div><div class="eye"><svg width="8" height="6" viewBox="0 0 8 6" style=""><ellipse cx="4" cy="3" rx="3.800" ry="2.300" fill="#f4e7a0" stroke="#8f8a2a" stroke-width=".500"/><circle cx="4" cy="3" r="1.500" fill="#5a7d1e"/><circle cx="4" cy="3" r=".700" fill="#222"/></svg></div></div>
<div class="row" style="top:146.75000000000003px"><div class="ic" style="left:3.2px;top:3.2px"><svg width="14" height="13" viewBox="0 0 14 13" style=""><path d="M0 1.600L13.600 0v10.400L0 12z" fill="#e9e9e9" stroke="#d2d2d2" stroke-width=".600"/><path d="M1 2.600L12.600 1.200v1L1 3.600z" fill="#f8f8f8"/></svg></div><div class="n" style="left:21.2px">Модель прямоугольник вертикаль...</div><div class="d" style="left:21.2px">100.0 x 1.0 x 69.0</div><div class="eye"><svg width="8" height="6" viewBox="0 0 8 6" style=""><ellipse cx="4" cy="3" rx="3.800" ry="2.300" fill="#f4e7a0" stroke="#8f8a2a" stroke-width=".500"/><circle cx="4" cy="3" r="1.500" fill="#5a7d1e"/><circle cx="4" cy="3" r=".700" fill="#222"/></svg></div></div>
<div class="row" style="top:167.60000000000002px"><div class="ic" style="left:3.2px;top:3.2px"><svg width="14" height="13" viewBox="0 0 14 13" style=""><path d="M0 1.600L13.600 0v10.400L0 12z" fill="#e9e9e9" stroke="#d2d2d2" stroke-width=".600"/><path d="M1 2.600L12.600 1.200v1L1 3.600z" fill="#f8f8f8"/></svg></div><div class="n" style="left:21.2px">Модель прямоугольник вертикаль...</div><div class="d" style="left:21.2px">100.0 x 1.0 x 69.0</div><div class="eye"><svg width="8" height="6" viewBox="0 0 8 6" style=""><ellipse cx="4" cy="3" rx="3.800" ry="2.300" fill="#f4e7a0" stroke="#8f8a2a" stroke-width=".500"/><circle cx="4" cy="3" r="1.500" fill="#5a7d1e"/><circle cx="4" cy="3" r=".700" fill="#222"/></svg></div></div><div class="abs" style="left:150.6px;top:10px;width:2px;height:19.6px;background:#9a9a9a;border-radius:1px"></div></div>
</div>
</body></html>
